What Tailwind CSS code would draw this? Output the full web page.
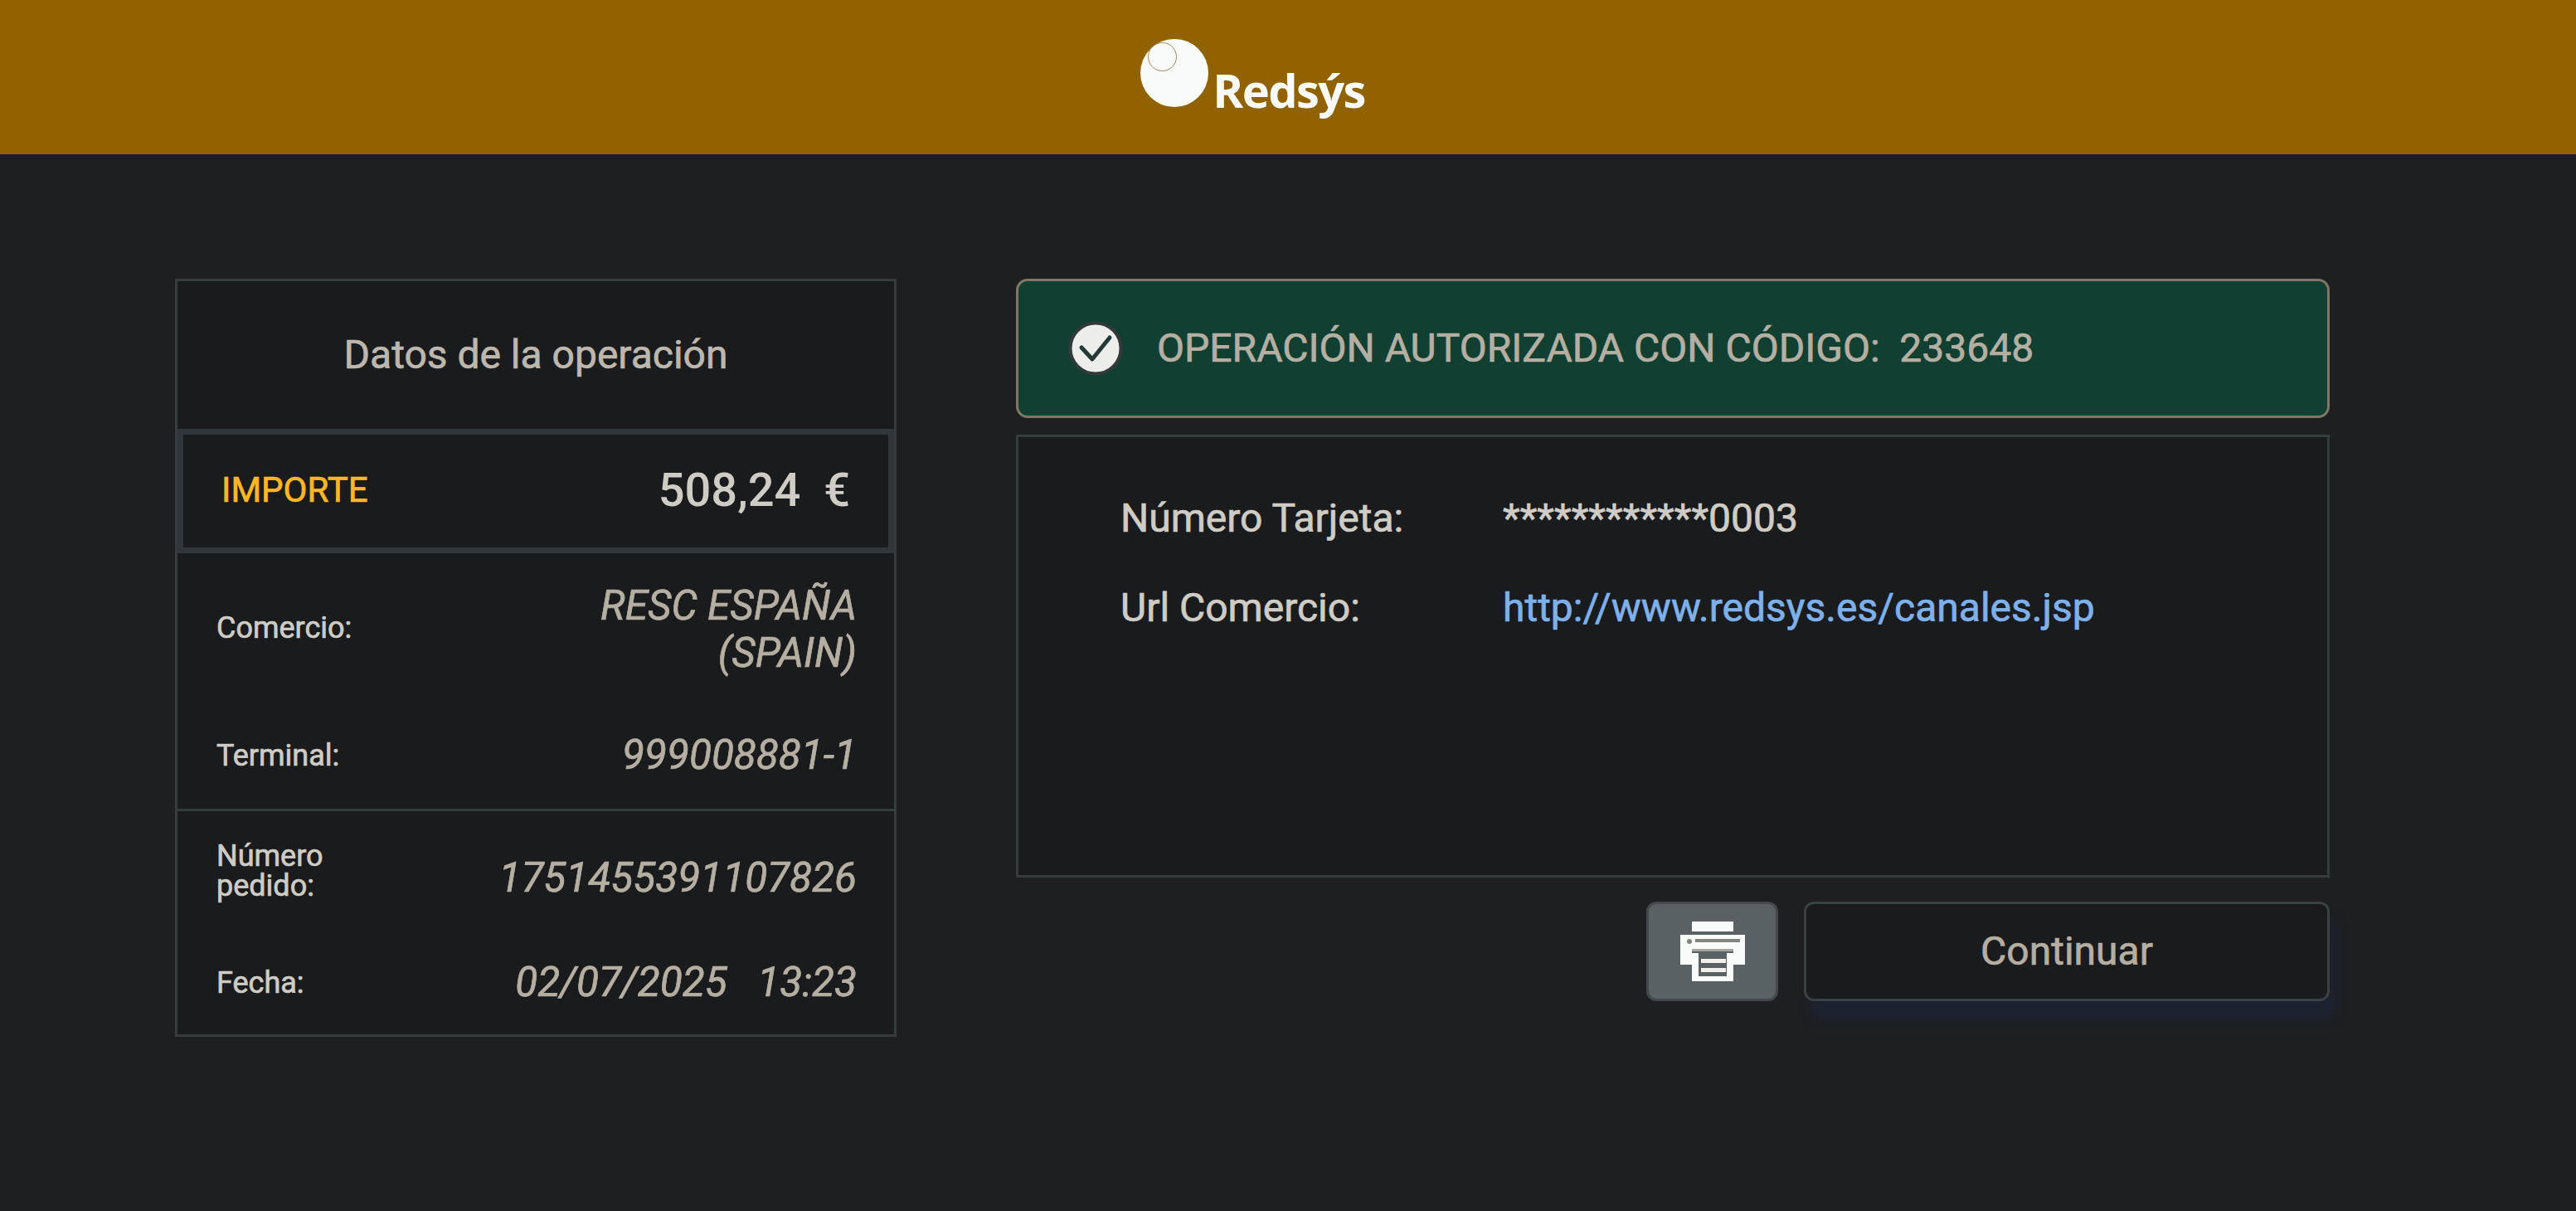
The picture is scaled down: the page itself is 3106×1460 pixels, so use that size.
<!DOCTYPE html>
<html lang="es">
<head>
    <meta charset="UTF-8">
    <title>Redsys</title>
    <script src="https://cdn.jsdelivr.net/npm/@tailwindcss/browser@4"></script>
</head>
<body class="bg-[#1d1f21] font-['Roboto',sans-serif] overflow-hidden [-webkit-text-stroke:0.7px]">
    <div class="min-h-[1460px]">
        <!-- cabecera -->
        <header class="flex h-[186px] items-start justify-center bg-[#906300] pr-[85px]">
            <div class="relative mt-[47px] flex items-start">
                <div class="relative h-[82px] w-[82px] rounded-full bg-[#f8fbf9]">
                    <div class="absolute left-[9px] top-[4px] h-[35px] w-[35px] rounded-full border border-[#a08a5a]"></div>
                </div>
                <span class="ml-[5px] mt-[23px] font-['Open_Sans',sans-serif] text-[56px] font-bold leading-[76px] tracking-[-1.6px] text-[#f8fbf9] [-webkit-text-stroke:0px]">Redsýs</span>
            </div>
        </header>

        <main class="flex items-start pl-[211px] pt-[150px]">
            <!-- datos de la operacion -->
            <section class="w-[870px] border-[3px] border-[#363c3e] bg-[#191b1d]">
                <h2 class="flex h-[178px] items-center justify-center text-[48px] font-normal text-[#bdb7ae]">Datos de la operación</h2>
                <div class="flex h-[150px] items-center justify-between border-[7px] border-[#30363a] pb-[3px] pl-[46px] pr-[46px]">
                    <span class="text-[42px] text-[#ffb726]">IMPORTE</span>
                    <span class="text-[56px] font-medium text-[#cfccc6] [-webkit-text-stroke:0px]">508,24&nbsp; €</span>
                </div>
                <div class="h-[308px] pl-[47px] pr-[45px]">
                    <div class="flex h-[180px] items-center justify-between pt-[3px]">
                        <span class="mb-[4px] text-[36px] text-[#cfccc6]">Comercio:</span>
                        <span class="w-[440px] text-right text-[49.5px] italic leading-[57px] text-[#b5aea3]">RESC ESPAÑA (SPAIN)</span>
                    </div>
                    <div class="flex h-[126px] items-center justify-between">
                        <span class="mt-[2px] text-[36px] text-[#cfccc6]">Terminal:</span>
                        <span class="text-[49.5px] italic text-[#b5aea3]">999008881-1</span>
                    </div>
                </div>
                <div class="h-[272px] border-t-[3px] border-[#363c3e] pl-[47px] pr-[45px]">
                    <div class="flex h-[160px] items-center justify-between">
                        <span class="mb-[16px] w-[160px] text-[36px] leading-[36px] text-[#cfccc6]">Número pedido:</span>
                        <span class="text-[49.5px] italic text-[#b5aea3]">1751455391107826</span>
                    </div>
                    <div class="flex h-[93px] items-center justify-between">
                        <span class="text-[36px] text-[#cfccc6]">Fecha:</span>
                        <span class="text-[49.5px] italic text-[#b5aea3]">02/07/2025&nbsp;&nbsp; 13:23</span>
                    </div>
                </div>
            </section>

            <!-- resultado -->
            <section class="ml-[144px] w-[1584px]">
                <div class="flex h-[168px] items-center rounded-[14px] border-[3px] border-[#7e7666] bg-[#114032] pl-[60px]">
                    <svg class="h-[66px] w-[66px]" viewBox="0 0 66 66">
                        <circle cx="33" cy="33" r="30.5" fill="#ededeb" stroke="#33383a" stroke-width="4"/>
                        <path d="M16 32 L29 46 L50 20" fill="none" stroke="#243a38" stroke-width="5" stroke-linecap="round" stroke-linejoin="round"/>
                    </svg>
                    <span class="ml-[41px] text-[48px] text-[#b5aea3]">OPERACIÓN AUTORIZADA CON CÓDIGO:&nbsp; 233648</span>
                </div>
                <div class="mt-[20px] h-[534px] border-[3px] border-[#363c3e] bg-[#191b1d] pl-[123px] pt-[44px] text-[48px] leading-[108px]">
                    <div class="grid grid-cols-[461px_1fr] text-[#cfccc6]">
                        <span>Número Tarjeta:</span>
                        <span>************0003</span>
                        <span>Url Comercio:</span>
                        <a class="text-[#7eb0ea]" href="#">http://www.redsys.es/canales.jsp</a>
                    </div>
                </div>
                <div class="mt-[29px] flex justify-end gap-[31px]">
                    <button class="flex h-[120px] w-[159px] items-center justify-center rounded-[12px] border-[3px] border-[#43494b] bg-[#596163]">
                        <svg class="h-[72px] w-[78px]" viewBox="0 0 78 72">
                            <rect x="14" y="0" width="50" height="12" fill="#f8fbf9"/>
                            <path d="M0 16 H78 V52 H64 V36 H14 V52 H0 Z" fill="#f8fbf9"/>
                            <rect x="18" y="21" width="54" height="4" fill="#85857f"/>
                            <circle cx="11" cy="24" r="3" fill="#85857f"/>
                            <rect x="14" y="33" width="50" height="3" fill="#a5a49d"/>
                            <path d="M14 38 H22 V66 H56 V38 H64 V72 H14 Z" fill="#f8fbf9"/>
                            <rect x="25" y="45" width="30" height="5" fill="#f0efec"/>
                            <rect x="25" y="56" width="30" height="5" fill="#f0efec"/>
                        </svg>
                    </button>
                    <button class="h-[120px] w-[634px] rounded-[12px] border-[3px] border-[#3b4143] bg-[#191b1d] text-[48px] text-[#b5aea3] shadow-[8px_22px_14px_rgba(25,45,85,0.28)]">Continuar</button>
                </div>
            </section>
        </main>
    </div>
</body>
</html>
